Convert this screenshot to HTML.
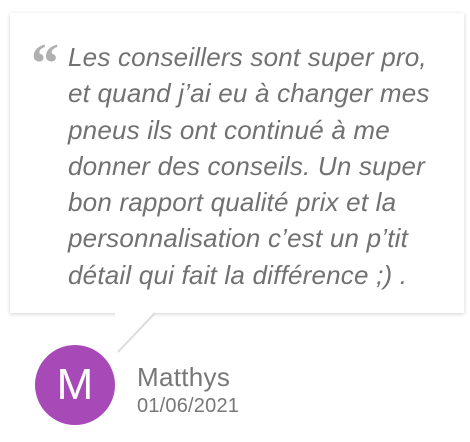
<!DOCTYPE html>
<html><head><meta charset="utf-8"><style>
html,body{margin:0;padding:0;background:#fff;width:470px;height:442px;overflow:hidden;position:relative}
.box{position:absolute;left:10px;top:13px;width:454px;height:300px;background:#fff;box-shadow:0 1px 4px rgba(0,0,0,.18);}
.tail{position:absolute;left:0;top:0}
.q{position:absolute;left:31px;top:36px;font:bold 56px "Liberation Serif",serif;color:#b0b0b0;line-height:1}
.txt{position:absolute;left:68px;top:39px;font:italic 26px/36.3px "Liberation Sans",sans-serif;color:#717171;white-space:nowrap;letter-spacing:0.2px}
.av{position:absolute;left:35px;top:345px;width:80px;height:80px;border-radius:50%;background:#a849b8;color:#fff;font:44px/80px "Liberation Sans",sans-serif;text-align:center}
.name{position:absolute;left:137px;top:362px;font:26px "Liberation Sans",sans-serif;color:#777;letter-spacing:0.3px}
.date{position:absolute;left:137px;top:395px;font:20px "Liberation Sans",sans-serif;color:#777;letter-spacing:0.2px}
</style></head><body>
<div class="box"></div>
<svg class="tail" width="470" height="442"><polygon points="115,312 155,312 118,352" fill="#fff"/><line x1="155" y1="313" x2="118" y2="352" stroke="#ddd" stroke-width="2"/></svg>
<div class="q">“</div>
<div class="txt">Les conseillers sont super pro,<br>et quand j’ai eu à changer mes<br>pneus ils ont continué à me<br>donner des conseils. Un super<br>bon rapport qualité prix et la<br>personnalisation c’est un p’tit<br>détail qui fait la différence ;) .</div>
<div class="av">M</div>
<div class="name">Matthys</div>
<div class="date">01/06/2021</div>
</body></html>
